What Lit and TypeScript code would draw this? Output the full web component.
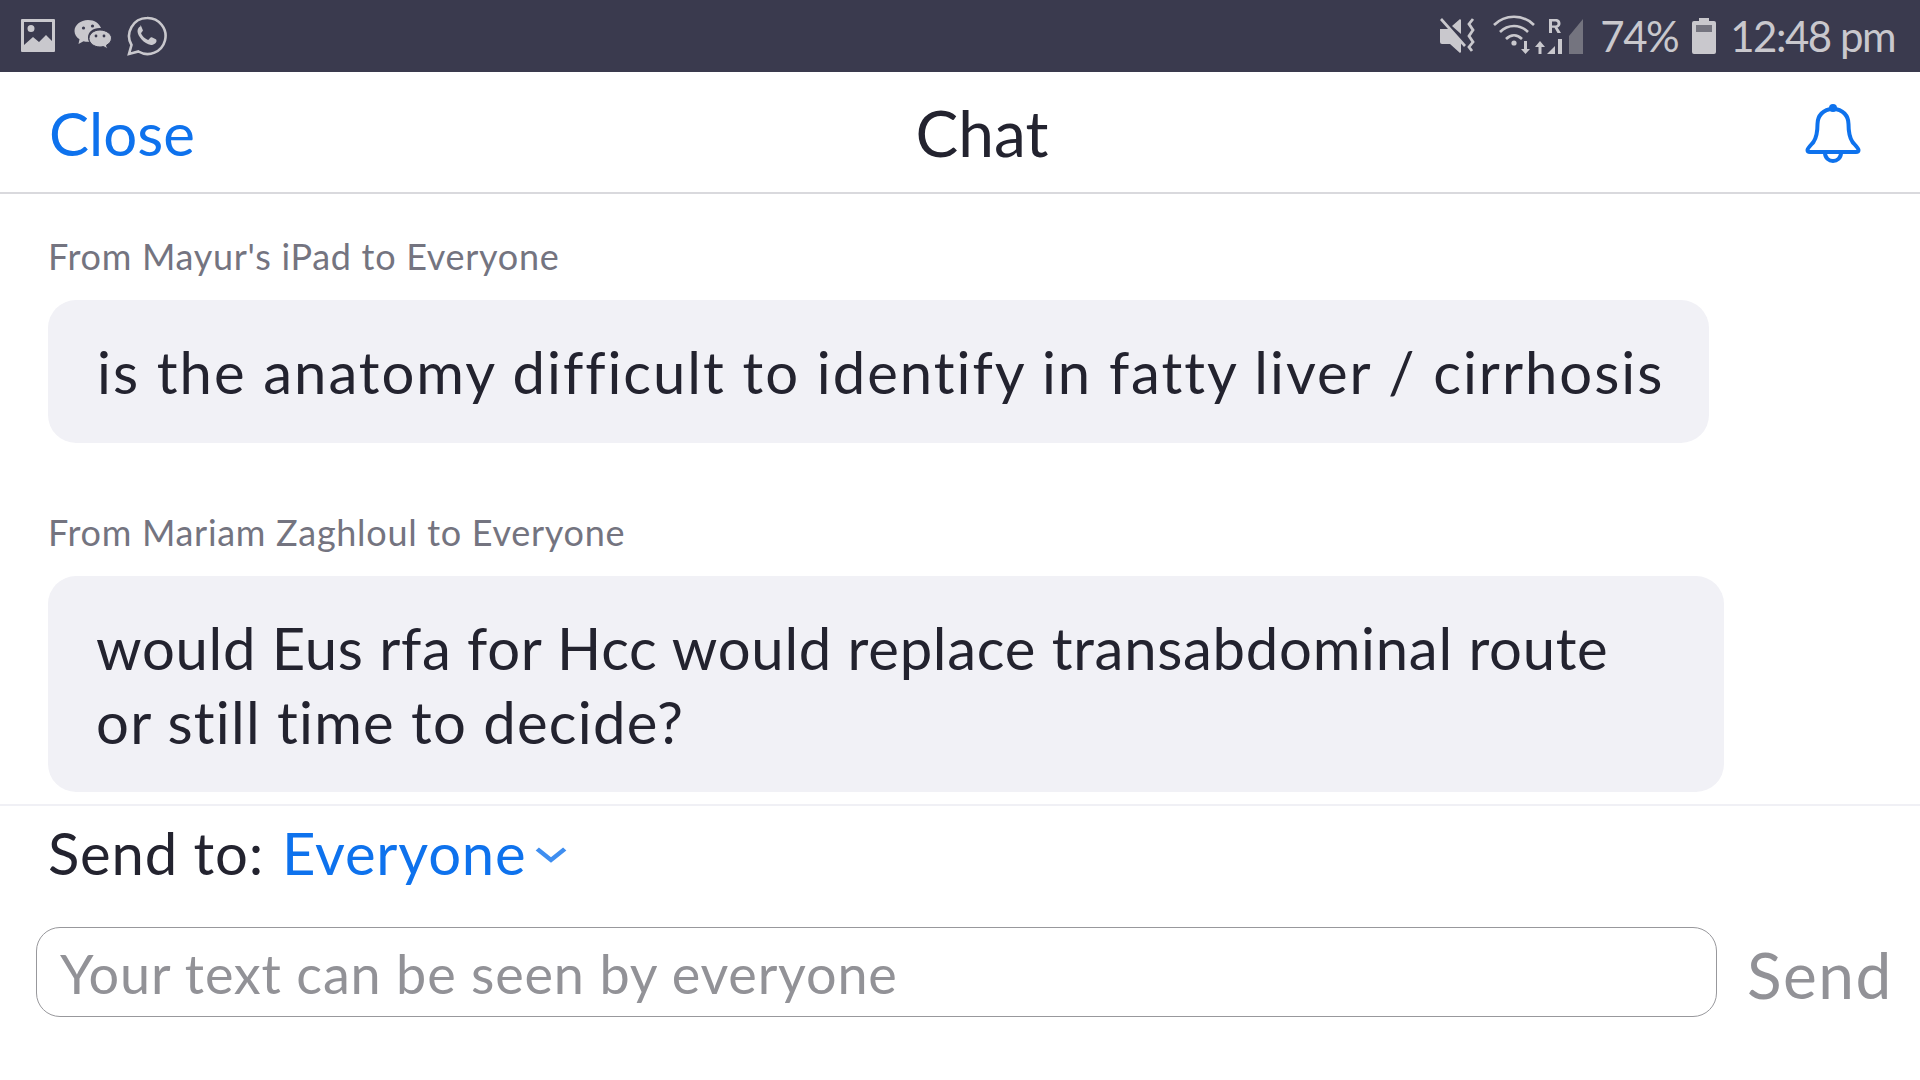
import { LitElement, html, css } from "lit";
import { customElement } from "lit/decorators.js";

@customElement("app-root")
export class AppRoot extends LitElement {
  static styles = css`
    :host { display: block; width: 1920px; height: 1080px; background: #fff; overflow: hidden;
      font-family: "Lato", "Open Sans", sans-serif; color: #23232f; }
    .status { height: 72px; background: #3a3a4e; color: #c9c8cd; display: flex; align-items: center; justify-content: space-between; padding: 0 25px 0 20px; box-sizing: border-box; }
    .st-left, .st-right { display: flex; align-items: center; }
    .st-left { gap: 15px; }
    .wechat { margin-left: 3px; }
    .whatsapp { margin-left: -2px; }
    .st-right { font-size: 42px; letter-spacing: -1.5px; }
    .wifi { margin-left: 15px; }
    .signal { display: block; }
    .signal svg { display: block; }
    .pct { margin: 0 14px 0 17px; }
    .time { margin-left: 14px; }
    .header { height: 122px; box-sizing: border-box; border-bottom: 2px solid #d9d9dd; display: grid; grid-template-columns: 1fr auto 1fr; align-items: center; padding: 0 59px 0 49px; font-size: 60px; }
    .close { color: #0e72ed; padding-top: 2px; }
    .bell { justify-self: end; display: block; margin-top: 2px; }
    .title { color: #23232f; margin-left: 54px; font-size: 64px; }
    .chat { height: 610px; box-sizing: border-box; padding: 40px 0 0 48px; display: flex; flex-direction: column; align-items: flex-start; }
    .from { font-size: 36px; line-height: 44px; color: #747480; letter-spacing: 0.7px; }
    .bubble { margin-top: 22px; background: #f1f1f6; border-radius: 28px; font-size: 58px; line-height: 74px; box-sizing: border-box; white-space: nowrap; }
    .b1 { width: 1661px; height: 143px; padding: 35px 49px; margin-bottom: 67px; letter-spacing: 1.97px; }
    .b2 { width: 1676px; height: 216px; padding: 35px 48px; }
    .l1, .l2 { display: block; }
    .l1 { letter-spacing: 0.73px; }
    .l2 { letter-spacing: 1.25px; }
    .divider { height: 2px; background: #f0f0f5; }
    .sendto { display: flex; align-items: center; height: 96px; box-sizing: border-box; padding: 0 0 4px 48px; font-size: 58px; letter-spacing: 0.8px; }
    .ev { color: #0e72ed; margin-left: 18px; }
    .chev { margin: 6px 0 0 9px; display: block; }
    .row { display: flex; align-items: center; padding: 25px 30px 0 36px; }
    .input { width: 1681px; height: 90px; box-sizing: border-box; border: 1.5px solid #98989c; border-radius: 24px; padding: 2px 0 0 23px; display: flex; align-items: center; font-size: 54px; letter-spacing: 0.8px; color: #929297; flex: none; }
    .send { margin-left: 30px; padding-top: 4px; font-size: 64px; letter-spacing: 1.5px; color: #929297; }
  `;

  private statusLeft() {
    return html`
      <svg width="36" height="36" viewBox="0 0 36 36"><path fill="#c9c8cd" fill-rule="evenodd" d="M2 1h32a1 1 0 0 1 1 1v31a1 1 0 0 1-1 1H2a1 1 0 0 1-1-1V2a1 1 0 0 1 1-1zm2 3v23l9-8 6 5 7-7 6 6V4zM11 7a3.500 3.500 0 1 1 0 7 3.500 3.500 0 0 1 0-7z"/></svg>
      <svg class="wechat" width="40" height="34" viewBox="0 0 40 34"><path fill="#c9c8cd" d="M14 1C6.500 1 .500 6 .500 12c0 3.500 2 6.300 5 8.300L4.500 25l5-2.800c1.500.4 2.800.6 4.500.6h1.200C14.500 21.500 14 20 14 18.500 14 13 19 9 25.500 9c.5 0 1 0 1.500.1C25.500 4.500 20.500 1 14 1z"/><path fill="#c9c8cd" d="M26 11c-6 0-11 3.800-11 8.500S20 28 26 28c1.300 0 2.400-.2 3.500-.5l4 2.500-1-3.800c3-1.700 5-4 5-7.200C37.500 14.800 32 11 26 11z" stroke="#3a3a4e" stroke-width="1"/><circle cx="9.500" cy="9" r="1.600" fill="#3a3a4e"/><circle cx="18.500" cy="7" r="1.600" fill="#3a3a4e"/><circle cx="22" cy="17" r="1.400" fill="#3a3a4e"/><circle cx="30" cy="17" r="1.400" fill="#3a3a4e"/></svg>
      <svg class="whatsapp" width="40" height="40" viewBox="0 0 40 40"><path fill="none" stroke="#c9c8cd" stroke-width="2.600" d="M20 2a18 18 0 0 0-15.500 27L2 38l9.400-2.500A18 18 0 1 0 20 2z"/><path fill="#c9c8cd" d="M13.500 10.500c-1 0-3 2-3 4.500 0 5 6.500 13 13.500 14 2.500 0 5.500-2 5.500-4 0-1-.2-1.500-.7-1.700l-4-2c-.7-.3-1.100 0-1.500.5l-1.500 1.800c-.4.4-.8.4-1.300.2-3-1.300-5-3.500-6.300-6-.2-.5 0-.9.3-1.200l1.200-1.500c.3-.4.3-.8.1-1.200l-1.700-3.800c-.2-.5-.6-.6-1-.6z"/></svg>`;
  }

  private statusRight() {
    return html`
      <svg width="38" height="36" viewBox="0 0 38 36"><path fill="#c9c8cd" d="M0 11h7l2.500 0L21 24v10l-1 1-10-9H2a2 2 0 0 1-2-2zM12 8l8-7 1 1v14zM2 0l24 27-2 2L0 2z"/><path fill="none" stroke="#c9c8cd" stroke-width="2.800" d="M33 1l-4 5 4 6-4 6 4 6-4 5 3 4"/></svg>
      <svg class="wifi" width="54" height="42" viewBox="0 0 54 42"><g fill="none" stroke="#c9c8cd" stroke-width="2.600"><path d="M1 10C12-1 30-1 41 10"/><path d="M7 17c8-8 20-8 28 0"/><path d="M13 24c5-5 11-5 16 0"/></g><circle cx="21" cy="28" r="2.600" fill="#c9c8cd"/><path fill="#c9c8cd" d="M31 26h3v8h3l-4.500 5-4.500-5h3zM47 26l5 6h-3.500v7h-3v-7H42z"/></svg>
      <span class="signal"><svg width="36" height="36" viewBox="0 0 36 36"><path fill="#c9c8cd" d="M0 36l8-8v8zM11 21h4v15h-4z"/><path fill="#74747f" d="M22 18L36 1v35H22z"/><path fill="#c9c8cd" d="M2 1h6.500c3.500 0 5 2 5 4.500 0 2-1.200 3.500-3 4L14 15h-3.500l-3-5.200H5V15H2zm3 2.500v4h3.500c1.500 0 2-1 2-2s-.5-2-2-2z"/></svg></span>
      <span class="pct">74%</span>
      <svg width="24" height="36" viewBox="0 0 24 36"><path fill="#c9c8cd" d="M7 0h10v3h5a2 2 0 0 1 2 2v29a2 2 0 0 1-2 2H2a2 2 0 0 1-2-2V5a2 2 0 0 1 2-2h5z"/><rect x="4" y="7" width="16" height="7" fill="#74747f"/></svg>
      <span class="time">12:48 pm</span>`;
  }

  render() {
    return html`
      <div class="status">
        <div class="st-left">${this.statusLeft()}</div>
        <div class="st-right">${this.statusRight()}</div>
      </div>
      <div class="header">
        <span class="close">Close</span>
        <span class="title">Chat</span>
        <svg class="bell" width="56" height="60" viewBox="0 0 56 60"><g fill="none" stroke="#0e72ed" stroke-width="4" stroke-linejoin="round"><path d="M28 6c-10 0-15.500 7-15.500 15 0 6 0 12-4 18-1.500 2-6 6-6 8 0 1.500 1 2 2.500 2h46c1.500 0 2.500-.5 2.500-2 0-2-4.500-6-6-8-4-6-4-12-4-18 0-8-5.500-15-15.500-15z"/><path d="M20 50c0 5 4 8 8 8s8-3 8-8"/></g><circle cx="28" cy="5" r="4" fill="#0e72ed"/></svg>
      </div>
      <div class="chat">
        <div class="from">From Mayur's iPad to Everyone</div>
        <div class="bubble b1">is the anatomy difficult to identify in fatty liver / cirrhosis</div>
        <div class="from">From Mariam Zaghloul to Everyone</div>
        <div class="bubble b2"><span class="l1">would Eus rfa for Hcc would replace transabdominal route</span><span class="l2">or still time to decide?</span></div>
      </div>
      <div class="divider"></div>
      <div class="sendto"><span>Send to:</span><span class="ev">Everyone</span>
        <svg class="chev" width="32" height="16" viewBox="0 0 28 16" preserveAspectRatio="none"><path d="M2 2l12 11L26 2" fill="none" stroke="#3f8ef0" stroke-width="4.200"/></svg>
      </div>
      <div class="row">
        <div class="input">Your text can be seen by everyone</div>
        <div class="send">Send</div>
      </div>
    `;
  }
}
